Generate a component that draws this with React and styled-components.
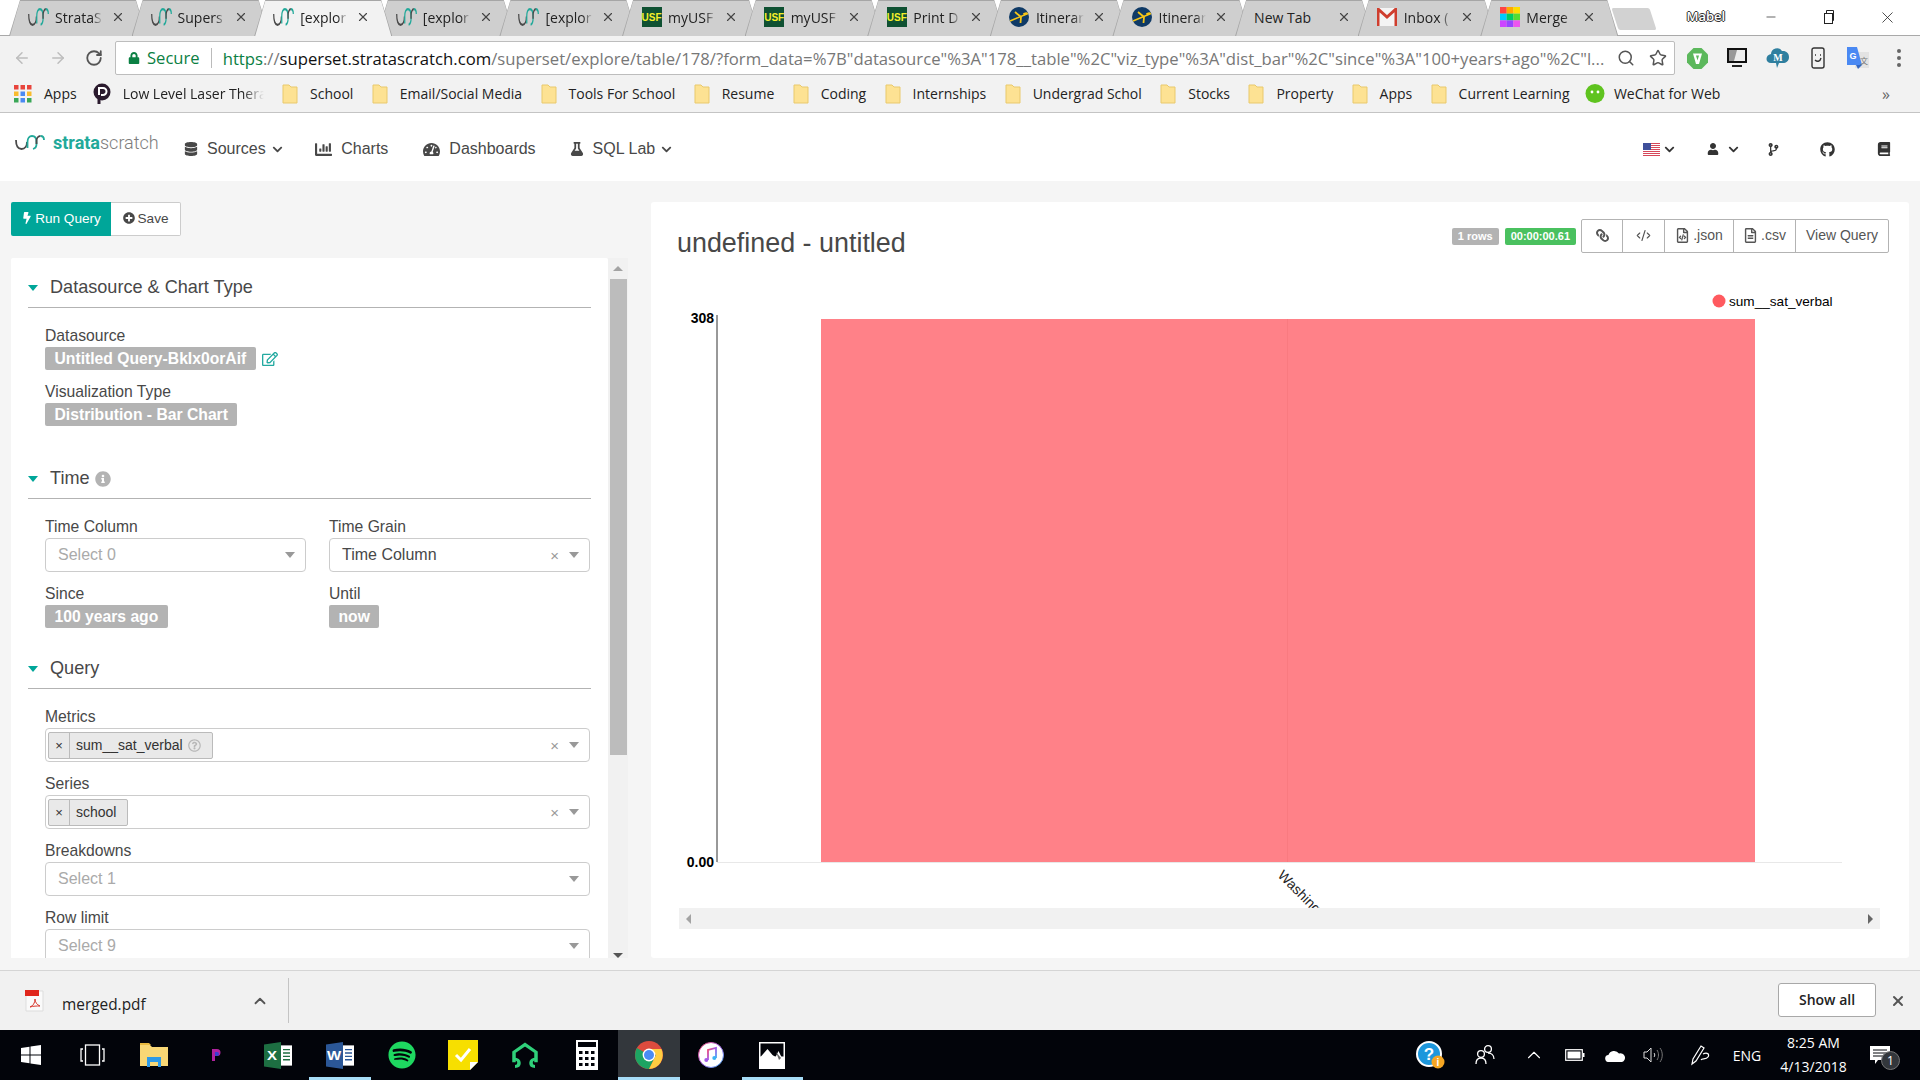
import React from "react";
import styled, { createGlobalStyle } from "styled-components";
import { ArrowLeft, ArrowRight, RotateCw, Search, Star, X, ChevronUp, Minus, CodeXml } from "lucide-react";
import {
  FaDatabase,
  FaChartBar,
  FaTachometerAlt,
  FaFlask,
  FaChevronDown,
  FaUser,
  FaGithub,
  FaBook,
  FaBolt,
  FaPlusCircle,
  FaRegEdit,
  FaInfoCircle,
  FaLink,
  FaRegFileCode,
  FaRegFileAlt,
  FaLock,
  FaCodeBranch,
  FaSpotify,
  FaRegQuestionCircle,
} from "react-icons/fa";

const GlobalStyle = createGlobalStyle`
  html, body {
    margin: 0;
    padding: 0;
    overflow: hidden;
    background: #fff;
    font-family: "Liberation Sans", Arial, sans-serif;
  }
  * { box-sizing: border-box; }
`;

const chromeFont = `"Open Sans", "Noto Sans", sans-serif`;

const Screen = styled.div`
  width: 1920px;
  height: 1080px;
  display: flex;
  flex-direction: column;
  overflow: hidden;
`;

/* ---------- browser tabs ---------- */
const TabStrip = styled.div`
  height: 36px;
  padding-left: 9px;
  display: flex;
  align-items: flex-start;
  background: #fff;
  border-bottom: 1px solid #a9a9a9;
`;
const Tab = styled.div`
  position: relative;
  width: 138px;
  height: 36px;
  margin-right: -15.4px;
  padding: 0 0 2px 19px;
  display: flex;
  align-items: center;
  flex-shrink: 0;
  z-index: ${(p) => (p.$active ? 2 : 1)};
  background: #a6a6a6;
  clip-path: polygon(11px 0, 127px 0, 138px 100%, 0 100%);
  font-family: ${chromeFont};
  font-size: 14px;
  color: #222;
  &::before {
    content: "";
    position: absolute;
    inset: 1px 1px 0 1px;
    background: ${(p) => (p.$active ? "#f2f2f2" : "#cfcfcf")};
    clip-path: polygon(10px 0, 126px 0, 136px 100%, 0 100%);
  }
`;
const TabIcon = styled.span`
  position: relative;
  width: 21px;
  height: 20px;
  display: flex;
  align-items: center;
  justify-content: center;
  flex-shrink: 0;
`;
const TabLabel = styled.span`
  position: relative;
  width: ${(p) => (p.$wide ? 75 : 48)}px;
  margin-left: ${(p) => (p.$wide ? 0 : 6)}px;
  overflow: hidden;
  white-space: nowrap;
  ${(p) =>
    p.$wide
      ? ""
      : `-webkit-mask-image: linear-gradient(90deg, #000 78%, transparent);
  mask-image: linear-gradient(90deg, #000 78%, transparent);`}
`;
const TabClose = styled(X)`
  position: relative;
  margin-left: 8px;
  color: #444;
`;
const NewTab = styled.div`
  width: 38px;
  height: 22px;
  margin: 8px 0 0 12px;
  background: #d2d2d2;
  border-radius: 2px;
  transform: skewX(18deg);
  flex-shrink: 0;
`;
const WindowArea = styled.div`
  margin-left: auto;
  height: 34px;
  padding-right: 3px;
  display: flex;
  align-items: center;
  color: #222;
`;
const UserName = styled.span`
  width: 38px;
  margin-right: 17px;
  font-family: ${chromeFont};
  font-size: 13px;
  font-weight: 600;
  color: #fff;
  text-shadow: 1px 0 0 #333, -1px 0 0 #333, 0 1px 0 #333, 0 -1px 0 #333;
  transform: translateY(-1px);
`;
const WindowButton = styled.span`
  width: 58.5px;
  display: flex;
  justify-content: center;
`;
const RestoreIcon = () => (
  <svg width="12" height="14" viewBox="0 0 12 14" fill="none" stroke="#222">
    <rect x="1.5" y="3.5" width="8" height="10" fill="#fff" />
    <path d="M3.5 3V.5h7v10H9.5" />
  </svg>
);

/* ---------- address bar ---------- */
const Toolbar = styled.div`
  height: 39px;
  background: #f2f2f2;
  padding: 5px 0 0 4px;
  display: flex;
  align-items: flex-start;
`;
const NavArrow = styled.span`
  width: 36px;
  height: 34px;
  flex-shrink: 0;
  display: flex;
  align-items: center;
  justify-content: center;
  color: ${(p) => (p.$off ? "#bdbdbd" : "#555")};
`;
const Omnibox = styled.div`
  width: 1560px;
  height: 34px;
  margin-left: 3px;
  padding-left: 12px;
  flex-shrink: 0;
  display: flex;
  align-items: center;
  background: #fff;
  border: 1px solid #bdbdbd;
  border-radius: 2px;
  font-family: ${chromeFont};
  font-size: 16.6px;
`;
const Secure = styled.span`
  margin-left: 7px;
  padding-right: 11px;
  border-right: 1px solid #bbb;
  color: #0b8043;
  line-height: 20px;
`;
const UrlText = styled.span`
  width: 1382px;
  margin-left: 11px;
  overflow: hidden;
  white-space: nowrap;
  color: #777;
  font-size: 16.7px;
`;
const UrlPart = styled.span`
  color: ${(p) => p.$color};
`;
const OmniTools = styled.span`
  margin-left: 12px;
  display: flex;
  align-items: center;
  gap: 14px;
  color: #555;
`;
const Extensions = styled.div`
  margin-left: 2px;
  display: flex;
  align-items: center;
  height: 34px;
`;
const ExtSlot = styled.span`
  width: 40.3px;
  display: flex;
  align-items: center;
  justify-content: center;
`;

/* ---------- bookmarks ---------- */
const BookmarkBar = styled.div`
  height: 38px;
  padding: 0 0 0 14px;
  display: flex;
  align-items: center;
  background: #f2f2f2;
  border-bottom: 1px solid #c4c4c4;
  font-family: ${chromeFont};
  font-size: 14px;
  color: #222;
`;
const Bookmark = styled.span`
  display: flex;
  align-items: center;
  gap: 12px;
  margin-right: ${(p) => p.$after || 18.4}px;
  white-space: nowrap;
`;
const WeChatBookmark = styled(Bookmark)`
  margin-left: -3px;
  gap: 9px;
`;
const FadeText = styled.span`
  width: 141px;
  overflow: hidden;
  -webkit-mask-image: linear-gradient(90deg, #000 85%, transparent);
  mask-image: linear-gradient(90deg, #000 85%, transparent);
`;
const More = styled.span`
  margin-left: auto;
  margin-right: 30px;
  color: #666;
  font-size: 16px;
`;
const Folder = () => (
  <svg width="16" height="20" viewBox="0 0 16 20">
    <path d="M1 1h6l2 2h6v16H1z" fill="#fde293" stroke="#e9c96c" />
  </svg>
);
const AppsGrid = () => {
  const colors = ["#e8453c", "#e8453c", "#e8453c", "#f9bb2d", "#4a89f3", "#f9bb2d", "#3aa757", "#4a89f3", "#3aa757"];
  return (
    <svg width="18" height="18" viewBox="0 0 18 18">
      {colors.map((c, i) => (
        <rect key={i} x={(i % 3) * 6.5} y={Math.floor(i / 3) * 6.5} width="4.5" height="4.5" fill={c} />
      ))}
    </svg>
  );
};
const PocketP = () => (
  <svg width="18" height="22" viewBox="0 0 18 22">
    <circle cx="9" cy="9" r="8.5" fill="#2b1b2e" />
    <path d="M6 19V5h4a3.5 3.5 0 0 1 0 7H8" fill="none" stroke="#fff" strokeWidth="2" />
    <path d="M6 12v9" stroke="#2b1b2e" strokeWidth="3" />
  </svg>
);
const WeChat = () => (
  <svg width="20" height="20" viewBox="0 0 20 20">
    <circle cx="10" cy="9.5" r="9.5" fill="#5fc31f" />
    <path d="M4 17l5-1-3-2z" fill="#5fc31f" />
    <circle cx="7" cy="8" r="1.4" fill="#fff" />
    <circle cx="13" cy="8" r="1.4" fill="#fff" />
  </svg>
);

/* ---------- app nav ---------- */
const NavBar = styled.div`
  height: 68px;
  padding: 4px 0 0 15px;
  display: flex;
  align-items: center;
  background: #fff;
  font-size: 16px;
  color: #484848;
`;
const Logo = styled.div`
  display: flex;
  align-items: center;
  width: 169px;
  gap: 8px;
  margin-top: -14px;
`;
const LogoText = styled.span`
  font-family: Roboto, sans-serif;
  font-size: 18px;
  font-weight: 300;
  color: #7d7d7d;
  b {
    color: #22a99a;
    font-weight: 700;
  }
`;
const NavItem = styled.span`
  display: flex;
  align-items: center;
  gap: 9px;
  margin-right: ${(p) => p.$after}px;
  white-space: nowrap;
`;
const NavChevron = styled(FaChevronDown)`
  margin-left: -3px;
  font-size: 11px;
`;
const NavRight = styled.div`
  margin-left: auto;
  padding-right: 29px;
  display: flex;
  align-items: center;
  color: #333;
`;
const NavRightItem = styled.span`
  display: flex;
  align-items: center;
  gap: ${(p) => p.$gap || 7}px;
  margin-left: ${(p) => p.$before}px;
`;
const Flag = () => (
  <svg width="17" height="13" viewBox="0 0 17 13">
    <rect width="17" height="13" fill="#fff" />
    {[0, 2, 4, 6, 8, 10, 12].map((y) => (
      <rect key={y} y={y} width="17" height="1" fill="#d6485a" />
    ))}
    <rect width="8" height="7" fill="#3f4f9a" />
  </svg>
);
const StrataMark = ({ w = 30, h = 15 }) => (
  <svg width={w} height={h} viewBox="0 0 30 15" fill="none" strokeWidth="1.8" preserveAspectRatio="none">
    <path d="M1 5C1 11 3 14 6.500 14C10 14 12 11 12 7" stroke="#4a4a4a" />
    <path d="M12.500 13V7C12.500 3 14.500 1 17 1C20 1 21.500 3 21.500 7V9C21.500 12 20 13.500 18 14" stroke="#22a99a" />
    <path d="M21.500 9V6C21.500 3 23.500 1 25.500 1" stroke="#4a4a4a" />
    <path d="M25.500 1C27.500 1 29 2.500 29 5" stroke="#22a99a" />
  </svg>
);

/* ---------- page body ---------- */
const Content = styled.div`
  height: 789px;
  padding: 21px 11px 12px 11px;
  display: grid;
  grid-template-columns: 617px 1258px;
  column-gap: 23px;
  background: #f5f5f5;
`;
const LeftColumn = styled.div`
  display: flex;
  flex-direction: column;
  min-height: 0;
`;
const ActionRow = styled.div`
  display: flex;
  height: 34px;
  margin-bottom: 22px;
`;
const RunButton = styled.button`
  width: 100px;
  height: 34px;
  padding: 0 0 2px;
  display: flex;
  align-items: center;
  justify-content: center;
  gap: 2px;
  border: none;
  border-radius: 2px 0 0 2px;
  background: #00a699;
  color: #fff;
  font: 13.6px "Liberation Sans", sans-serif;
`;
const SaveButton = styled.button`
  width: 70px;
  height: 34px;
  padding: 0 0 2px;
  display: flex;
  align-items: center;
  justify-content: center;
  gap: 3px;
  border: 1px solid #ccc;
  border-left: none;
  border-radius: 0 2px 2px 0;
  background: #fff;
  color: #484848;
  font: 13.6px "Liberation Sans", sans-serif;
`;
const FormWrap = styled.div`
  flex: 1;
  min-height: 0;
  display: flex;
`;
const FormPanel = styled.div`
  width: 597px;
  padding: 10px 17px 0;
  background: #fff;
  overflow: hidden;
  border-radius: 2px 2px 0 0;
`;
const ScrollTrack = styled.div`
  width: 20px;
  background: #f1f1f1;
  display: flex;
  flex-direction: column;
  align-items: center;
  padding-top: 8px;
`;
const ArrowUp = styled.span`
  width: 0;
  height: 0;
  border: 5px solid transparent;
  border-top: none;
  border-bottom: 5px solid #a3a3a3;
`;
const ArrowDownSmall = styled.span`
  width: 0;
  height: 0;
  margin-top: 198px;
  border: 5px solid transparent;
  border-bottom: none;
  border-top: 5px solid #555;
`;
const ScrollThumb = styled.div`
  width: 17px;
  height: 478px;
  margin-top: 8px;
  background: #bcbcbc;
`;
const Section = styled.section`
  margin-bottom: ${(p) => p.$after}px;
`;
const SectionHeader = styled.div`
  height: 40px;
  display: flex;
  align-items: center;
  border-bottom: 1px solid #b3b3b3;
  font-size: 18.1px;
  color: #484848;
`;
const Caret = styled.span`
  width: 0;
  height: 0;
  margin-right: 12px;
  border-left: 5.5px solid transparent;
  border-right: 5.5px solid transparent;
  border-top: 6px solid #00a699;
`;
const InfoIcon = styled(FaInfoCircle)`
  margin-left: 5px;
  color: #b3b3b3;
  font-size: 16px;
`;
const SectionBody = styled.div`
  padding: 17px 1px 0 17px;
  display: flex;
  flex-direction: column;
  gap: 11px;
`;
const TwoColumns = styled.div`
  display: grid;
  grid-template-columns: 261px 261px;
  column-gap: 23px;
`;
const Field = styled.div`
  min-width: 0;
`;
const Label = styled.div`
  height: 22px;
  line-height: 22px;
  font-size: 15.7px;
  color: #484848;
`;
const TagRow = styled.div`
  display: flex;
  align-items: center;
  gap: 6px;
`;
const ValueTag = styled.span`
  height: 23px;
  padding: 0 9.5px;
  display: inline-flex;
  align-items: center;
  border-radius: 2px;
  background: #b3b3b3;
  color: #fff;
  font-size: 15.7px;
  font-weight: 700;
`;
const EditIcon = styled(FaRegEdit)`
  color: #22a9a0;
  font-size: 16px;
`;
const SelectBox = styled.div`
  height: 34px;
  padding: 0 10px 0 ${(p) => (p.$multi ? 2 : 12)}px;
  display: flex;
  align-items: center;
  background: #fff;
  border: 1px solid #ccc;
  border-radius: 4px;
  font-size: 16px;
  color: ${(p) => (p.$placeholder ? "#aaa" : "#484848")};
`;
const SelectValue = styled.span`
  flex: 1;
`;
const ClearMark = styled.span`
  margin-right: 10px;
  font-size: 15px;
  line-height: 1;
  color: #999;
`;
const SelectArrow = styled.span`
  width: 0;
  height: 0;
  border-left: 5.5px solid transparent;
  border-right: 5.5px solid transparent;
  border-top: 6px solid #999;
`;
const MultiTag = styled.span`
  height: 27px;
  display: inline-flex;
  align-items: center;
  background: #e9e9e9;
  border: 1px solid #bbb;
  border-radius: 2px;
  font-size: 14px;
  color: #333;
`;
const MultiRemove = styled.span`
  width: 21px;
  height: 100%;
  display: flex;
  align-items: center;
  justify-content: center;
  border-right: 1px solid #bbb;
  font-size: 13px;
  line-height: 1;
`;
const MultiText = styled.span`
  display: flex;
  align-items: center;
  gap: 5px;
  padding: 0 11px 0 6px;
`;
const HelpIcon = styled(FaRegQuestionCircle)`
  color: #b8b8b8;
  font-size: 13px;
`;

/* ---------- chart panel ---------- */
const ChartPanel = styled.div`
  height: 756px;
  padding: 17px 20px 0 26px;
  background: #fff;
  border-radius: 3px;
  overflow: hidden;
`;
const ChartHeader = styled.div`
  display: flex;
  align-items: center;
  height: 34px;
`;
const ChartTitle = styled.h1`
  margin: 15px 0 0;
  font-size: 26.9px;
  font-weight: 400;
  color: #484848;
`;
const HeaderTools = styled.div`
  margin-left: auto;
  display: flex;
  align-items: center;
`;
const Badge = styled.span`
  height: 17px;
  margin-right: 6px;
  padding: 0 6px;
  display: inline-flex;
  align-items: center;
  border-radius: 2px;
  background: ${(p) => p.$bg};
  color: #fff;
  font-size: 11px;
  font-weight: 700;
`;
const ButtonGroup = styled.div`
  display: flex;
  height: 34px;
  margin-left: -1px;
  background: #fff;
  border: 1px solid #b3b3b3;
  border-radius: 2px;
`;
const GroupButton = styled.span`
  width: ${(p) => p.$w}px;
  padding-bottom: 2px;
  display: flex;
  align-items: center;
  justify-content: center;
  gap: 3px;
  font-size: 14px;
  color: #555;
  & + & {
    border-left: 1px solid #b3b3b3;
  }
`;
const LinkIcon = styled(FaLink)`
  transform: scaleX(-1);
`;
const ChartArea = styled.div`
  width: 1201px;
  margin: 27px 0 0 2px;
`;
const ChartSvg = styled.svg`
  display: block;
  font-family: "Liberation Sans", Arial, sans-serif;
`;
const HScroll = styled.div`
  height: 21px;
  padding: 0 7px;
  display: flex;
  align-items: center;
  justify-content: space-between;
  background: #f1f1f1;
`;
const HArrow = styled.span`
  width: 0;
  height: 0;
  border-top: 5px solid transparent;
  border-bottom: 5px solid transparent;
  ${(p) => (p.$right ? "border-left: 5px solid #666;" : "border-right: 5px solid #a3a3a3;")}
`;

/* ---------- download bar ---------- */
const DownloadBar = styled.div`
  height: 60px;
  display: flex;
  align-items: center;
  background: #f1f1f1;
  border-top: 1px solid #d5d5d5;
  font-family: ${chromeFont};
`;
const DownloadItem = styled.div`
  width: 289px;
  height: 45px;
  padding: 0 19px 0 25px;
  display: flex;
  align-items: center;
  border-right: 1px solid #c4c4c4;
  font-size: 15.4px;
  color: #222;
`;
const FileName = styled.span`
  margin-left: 18px;
  flex: 1;
  transform: translateY(4px);
`;
const ShowAll = styled.button`
  width: 98px;
  height: 34px;
  margin: -2px 0 0 auto;
  padding: 0;
  background: #fff;
  border: 1px solid #a8a8a8;
  border-radius: 3px;
  font: 600 14px ${chromeFont};
  color: #222;
`;
const DownloadClose = styled(X)`
  margin: 0 14px 0 14px;
  color: #555;
`;
const PdfIcon = () => (
  <svg width="19" height="22" viewBox="0 0 19 22">
    <path d="M1 1h17v20H1z" fill="#fafafa" stroke="#ddd" />
    <rect y="0" width="14" height="6" fill="#e0261c" />
    <path d="M5 17c3-1 5-4 5-8 0 3 2 6 5 7-3 0-7 0-10 1z" fill="none" stroke="#d9382f" strokeWidth="1" />
  </svg>
);

/* ---------- taskbar ---------- */
const Taskbar = styled.div`
  height: 50px;
  display: flex;
  align-items: stretch;
  background: #02040a;
  color: #fff;
  font-family: ${chromeFont};
`;
const TaskSlot = styled.span`
  width: 61.8px;
  display: flex;
  align-items: center;
  justify-content: center;
  background: ${(p) => (p.$focus ? "#33373c" : "transparent")};
  box-shadow: ${(p) => (p.$open ? "inset 0 -3px 0 #a6dcf7" : "none")};
`;
const Tray = styled.div`
  margin-left: auto;
  display: flex;
  align-items: center;
  padding-right: 30px;
`;
const TraySlot = styled.span`
  width: ${(p) => p.$w}px;
  display: flex;
  align-items: center;
  justify-content: center;
  font-size: 14px;
`;
const Clock = styled.span`
  width: 88px;
  margin-right: 12.5px;
  text-align: center;
  font-size: 14px;
  line-height: 24px;
`;
const NotifyWrap = styled.span`
  position: relative;
  display: flex;
`;
const NotifyCount = styled.span`
  position: absolute;
  right: -10px;
  bottom: -6px;
  width: 19px;
  height: 19px;
  border-radius: 50%;
  background: #33373c;
  border: 1px solid #777;
  display: flex;
  align-items: center;
  justify-content: center;
  font-size: 12px;
`;

const WindowsLogo = () => (
  <svg width="20" height="20" viewBox="0 0 20 20" fill="#fff">
    <path d="M0 3l8.5-1.2v7.7H0zM9.5 1.6L20 0v9.5H9.5zM0 10.5h8.5v7.7L0 17zM9.5 10.5H20V20L9.5 18.4z" />
  </svg>
);
const TaskView = () => (
  <svg width="25" height="22" viewBox="0 0 25 22" fill="none" stroke="#fff" strokeWidth="1.3">
    <rect x="5.5" y="1" width="14" height="20" />
    <path d="M3 5H1v12h2M22 5h2v12h-2" />
  </svg>
);
const Explorer = () => (
  <svg width="28" height="26" viewBox="0 0 28 26">
    <path d="M0 3h10l2 2h16v19H0z" fill="#f8d775" />
    <path d="M0 1h9l2 2H0z" fill="#e8b93f" />
    <path d="M7 15h14v10h-3v-5h-8v5H7z" fill="#2e9ae6" />
  </svg>
);
const PurpleApp = () => (
  <svg width="10" height="14" viewBox="0 0 10 14">
    <path d="M1 1h5a3.5 3.5 0 0 1 0 7H4v5H1z" fill="#b0229e" />
    <path d="M4 4h2a2 2 0 0 1 0 4H4z" fill="#3a3fd0" />
  </svg>
);
const OfficeDoc = ({ fill, letter }) => (
  <svg width="28" height="27" viewBox="0 0 28 32" preserveAspectRatio="none">
    <path d="M0 3l17-3v32L0 29z" fill={fill} />
    <path d="M17 4h11v24H17z" fill="#fff" />
    <path d="M19 9h7M19 13h7M19 17h7M19 21h7" stroke={fill} strokeWidth="1.6" />
    <text x="8" y="21" textAnchor="middle" fontSize="15" fontWeight="700" fill="#fff" fontFamily="Liberation Sans">
      {letter}
    </text>
  </svg>
);
const StickyNote = () => (
  <svg width="30" height="30" viewBox="0 0 30 30">
    <path d="M0 0h30v22l-8 8H0z" fill="#f7df00" />
    <path d="M30 22l-8 8v-8z" fill="#fff" />
    <path d="M8 15l5 5 9-11" fill="none" stroke="#fff" strokeWidth="3" />
  </svg>
);
const Headset = () => (
  <svg width="30" height="27" viewBox="0 0 30 32" fill="none" stroke="#2fd07a" strokeWidth="3.5" preserveAspectRatio="none">
    <path d="M4 24V12L15 3l11 9v12" />
    <path d="M4 20c3 0 5 2 5 5s-2 4-4 4M26 20c-3 0-5 2-5 5s2 4 4 4" />
  </svg>
);
const Calculator = () => (
  <svg width="22" height="30" viewBox="0 0 22 30">
    <rect width="22" height="30" fill="#fff" />
    <rect x="2" y="2" width="18" height="5" fill="#02040a" />
    {[11, 17, 23].map((y) =>
      [3, 9, 15].map((x) => <rect key={`${x}${y}`} x={x} y={y} width="3.5" height="3" fill="#02040a" />)
    )}
  </svg>
);
const ChromeLogo = () => (
  <svg width="28" height="28" viewBox="0 0 28 28">
    <circle cx="14" cy="14" r="14" fill="#dd4b3e" />
    <path d="M14 14L1.9 7A14 14 0 0 0 14 28l7-14z" fill="#1da462" />
    <path d="M14 8h12.4A14 14 0 0 1 14 28l7-14z" fill="#ffcd41" />
    <circle cx="14" cy="14" r="6.4" fill="#fff" />
    <circle cx="14" cy="14" r="5" fill="#4a8bf5" />
  </svg>
);
const ITunes = () => (
  <svg width="26" height="26" viewBox="0 0 26 26">
    <defs>
      <linearGradient id="itunesRing" x1="0" y1="0" x2="1" y2="1">
        <stop offset="0" stopColor="#f5466a" />
        <stop offset="0.5" stopColor="#a45be8" />
        <stop offset="1" stopColor="#3cb4f5" />
      </linearGradient>
    </defs>
    <circle cx="13" cy="13" r="12.5" fill="#fff" stroke="url(#itunesRing)" />
    <path d="M10 18V8l8-2v10" fill="none" stroke="url(#itunesRing)" strokeWidth="1.8" />
    <circle cx="8.3" cy="18" r="2" fill="#a45be8" />
    <circle cx="16.3" cy="16" r="2" fill="#3cb4f5" />
  </svg>
);
const PhotosIcon = () => (
  <svg width="26" height="27" viewBox="0 0 26 27">
    <rect width="26" height="27" fill="#fff" />
    <rect x="1.5" y="1.5" width="23" height="13" fill="#02040a" />
    <path d="M1.5 15l7-8 5 6 3 2 3-6 3 6 2 1v2h-23z" fill="#fff" />
    <path d="M17 10l3 8 2-2z" fill="#666" />
  </svg>
);
const HelpBadge = () => (
  <svg width="29" height="29" viewBox="0 0 29 29">
    <circle cx="13" cy="13" r="12" fill="#1d97dc" stroke="#fff" strokeWidth="2" />
    <text x="13" y="19" textAnchor="middle" fontSize="17" fontWeight="700" fill="#fff" fontFamily="Liberation Sans">?</text>
    <circle cx="22" cy="21" r="6.5" fill="#f5a623" />
    <text x="22" y="25" textAnchor="middle" fontSize="10" fontWeight="700" fill="#fff" fontFamily="Liberation Sans">i</text>
  </svg>
);
const People = () => (
  <svg width="20" height="22" viewBox="0 0 20 22" fill="none" stroke="#fff" strokeWidth="1.3">
    <circle cx="13" cy="5" r="3.4" />
    <circle cx="6" cy="10" r="3.4" />
    <path d="M1 20c0-5 3-6 5-6s5 1 5 6M13 9c3 0 6 2 6 6" />
  </svg>
);
const Battery = () => (
  <svg width="20" height="12" viewBox="0 0 20 12">
    <rect x="0.7" y="0.7" width="16.6" height="10.6" fill="none" stroke="#fff" strokeWidth="1.2" />
    <rect x="2.5" y="2.5" width="13" height="7" fill="#fff" />
    <rect x="18" y="4" width="1.5" height="4" fill="#fff" />
  </svg>
);
const CloudIcon = () => (
  <svg width="21" height="13" viewBox="0 0 21 13" fill="#fff">
    <path d="M4 13a3.5 3.5 0 0 1-.6-7A6 6 0 0 1 14 4.500a4.300 4.300 0 0 1 3 8.500z" />
  </svg>
);
const Speaker = () => (
  <svg width="22" height="18" viewBox="0 0 22 18" fill="none" stroke="#ddd" strokeWidth="1">
    <path d="M1 6h3l4-4v14l-4-4H1z" />
    <path d="M11 7c1 1 1 3 0 4" />
    <path d="M14 4c2 3 2 7 0 10M17 2c3 4 3 10 0 14" stroke="#777" />
  </svg>
);
const PenIcon = () => (
  <svg width="21" height="22" viewBox="0 0 21 22" fill="none" stroke="#fff" strokeWidth="1.2">
    <path d="M3 20l1-5 8-13 3 2-8 13z" />
    <path d="M14 10c4-2 7 0 5 3s-6 1-7 3" />
  </svg>
);
const ActionCenter = () => (
  <svg width="20" height="18" viewBox="0 0 20 18">
    <path d="M0 0h20v14H8l-3 4v-4H0z" fill="#fff" />
    <path d="M3 4h14M3 7h14M3 10h14" stroke="#02040a" />
  </svg>
);

/* ---------- favicons + extensions ---------- */
const UsfMark = styled.span`
  width: 20px;
  height: 20px;
  display: flex;
  align-items: center;
  justify-content: center;
  background: #0f5132;
  color: #f5f02a;
  font: 700 10px "Liberation Sans", sans-serif;
`;
const ExpediaMark = () => (
  <svg width="20" height="20" viewBox="0 0 20 20">
    <circle cx="10" cy="10" r="10" fill="#0f3a66" />
    <path d="M1 14L19 6.500" stroke="#f5c518" strokeWidth="1.6" />
    <path d="M6 5l6 5-0.500 6" fill="none" stroke="#f5c518" strokeWidth="1.8" />
    <path d="M14.500 7.500c1.500-.8 3-1.200 3.500-1" stroke="#f5c518" strokeWidth="2.400" />
  </svg>
);
const GmailMark = () => (
  <svg width="20" height="18" viewBox="0 0 20 18">
    <rect width="20" height="18" fill="#f4f4f4" />
    <path d="M1 18V1l9 8 9-8v17" fill="none" stroke="#cf3e2e" strokeWidth="3" />
  </svg>
);
const MergeMark = () => {
  const colors = ["#f44", "#fa0", "#fd0", "#0cf", "#0c6", "#5d3", "#c4f", "#94f", "#e5e"];
  return (
    <svg width="20" height="20" viewBox="0 0 21 21">
      {colors.map((c, i) => (
        <rect key={i} x={(i % 3) * 7} y={Math.floor(i / 3) * 7} width="7" height="7" fill={c} />
      ))}
    </svg>
  );
};
const VpnExt = () => (
  <svg width="21" height="21" viewBox="0 0 21 21">
    <path d="M6.500 0h8L21 6.500v8L14.500 21h-8L0 14.500v-8z" fill="#5cb85c" />
    <path d="M6 5.500h9l-3 10.500H9z" fill="#fff" />
    <path d="M9 7.500h3l-1.500 5z" fill="#5cb85c" />
  </svg>
);
const MonitorExt = () => (
  <svg width="20" height="20" viewBox="0 0 20 20">
    <rect x="1" y="1" width="18" height="13" fill="#999" stroke="#111" strokeWidth="2" />
    <path d="M10 2h8v11h-11z" fill="#eee" />
    <rect x="5" y="17" width="10" height="2" fill="#222" />
  </svg>
);
const MendeleyExt = () => (
  <svg width="24" height="22" viewBox="0 0 24 22">
    <path d="M5 7a6 6 0 0 1 11-3c4-.5 7 2 7 6 0 4-3 6-6 6h-4l-2 5-1-5H5c-6 0-6-8 0-9z" fill="#2f7f9f" />
    <text x="12" y="14" textAnchor="middle" fontSize="10" fontWeight="700" fill="#fff" fontFamily="Liberation Serif">M</text>
  </svg>
);
const PhoneExt = () => (
  <svg width="14" height="22" viewBox="0 0 14 22" fill="none" stroke="#333" strokeWidth="1.4">
    <rect x="1" y="1" width="12" height="20" rx="2" />
    <path d="M4 8h1M9 8h1M4 13c2 2 5 2 6-2" />
  </svg>
);
const TranslateExt = () => (
  <svg width="22" height="22" viewBox="0 0 22 22">
    <path d="M8 5h14v16H8z" fill="#e3e3e3" />
    <path d="M0 0h10l5 18H0z" fill="#4a89f3" />
    <path d="M9 18h6l-4 4z" fill="#3367c4" />
    <text x="6" y="12" textAnchor="middle" fontSize="9" fontWeight="700" fill="#fff" fontFamily="Liberation Sans">G</text>
    <text x="17" y="17" textAnchor="middle" fontSize="8" fill="#777" fontFamily="Noto Sans CJK SC">文</text>
  </svg>
);
const MenuDots = styled.span`
  width: 4px;
  height: 4px;
  border-radius: 50%;
  background: #666;
  box-shadow: 0 -7px 0 #666, 0 7px 0 #666;
`;

const strata = <StrataMark w={21} h={18} />;
const usf = <UsfMark>USF</UsfMark>;
const tabs = [
  { label: "StrataS", icon: strata },
  { label: "Supers", icon: strata },
  { label: "[explor", icon: strata, active: true },
  { label: "[explor", icon: strata },
  { label: "[explor", icon: strata },
  { label: "myUSF", icon: usf },
  { label: "myUSF", icon: usf },
  { label: "Print D", icon: usf },
  { label: "Itinerar", icon: <ExpediaMark /> },
  { label: "Itinerar", icon: <ExpediaMark /> },
  { label: "New Tab" },
  { label: "Inbox (", icon: <GmailMark /> },
  { label: "Merge", icon: <MergeMark /> },
];

const folders = [
  "School",
  "Email/Social Media",
  "Tools For School",
  "Resume",
  "Coding",
  "Internships",
  "Undergrad Schol",
  "Stocks",
  "Property",
  "Apps",
  "Current Learning",
];

const SectionTitle = ({ children }) => (
  <SectionHeader>
    <Caret />
    {children}
  </SectionHeader>
);

const Select = ({ placeholder, value, clearable }) => (
  <SelectBox $placeholder={!!placeholder}>
    <SelectValue>{placeholder || value}</SelectValue>
    {clearable && <ClearMark>×</ClearMark>}
    <SelectArrow />
  </SelectBox>
);

const MultiSelect = ({ value, help }) => (
  <SelectBox $multi>
    <SelectValue>
      <MultiTag>
        <MultiRemove>×</MultiRemove>
        <MultiText>
          {value}
          {help && <HelpIcon />}
        </MultiText>
      </MultiTag>
    </SelectValue>
    <ClearMark>×</ClearMark>
    <SelectArrow />
  </SelectBox>
);

const BarChart = () => (
  <ChartSvg width="1201" height="628" viewBox="0 0 1201 628">
    <rect x="142" y="39" width="934" height="543" fill="#ff8188" />
    <line x1="608.500" y1="39" x2="608.500" y2="582" stroke="#f97a80" />
    <line x1="38" y1="582.500" x2="1163" y2="582.500" stroke="#e8e8e8" />
    <line x1="38" y1="35" x2="38" y2="582" stroke="#333" />
    <text x="35" y="43" textAnchor="end" fontSize="14" fontWeight="700" fill="#000">308</text>
    <text x="35" y="587" textAnchor="end" fontSize="14" fontWeight="700" fill="#000">0.00</text>
    <circle cx="1040" cy="21" r="6.500" fill="#ff5a5f" />
    <text x="1050" y="26" fontSize="13.6" fill="#000">sum__sat_verbal</text>
    <text x="598" y="596" fontSize="14" fill="#222" transform="rotate(45 598 596)">Washington</text>
  </ChartSvg>
);

const App = () => (
  <Screen>
    <GlobalStyle />
    <TabStrip>
      {tabs.map((t, i) => (
        <Tab key={i} $active={t.active}>
          {t.icon && <TabIcon>{t.icon}</TabIcon>}
          <TabLabel $wide={!t.icon}>{t.label}</TabLabel>
          <TabClose size={14} strokeWidth={2} />
        </Tab>
      ))}
      <NewTab />
      <WindowArea>
        <UserName>Mabel</UserName>
        <WindowButton><Minus size={14} strokeWidth={1.2} /></WindowButton>
        <WindowButton><RestoreIcon /></WindowButton>
        <WindowButton><X size={19} strokeWidth={1} /></WindowButton>
      </WindowArea>
    </TabStrip>

    <Toolbar>
      <NavArrow $off><ArrowLeft size={18} /></NavArrow>
      <NavArrow $off><ArrowRight size={18} /></NavArrow>
      <NavArrow><RotateCw size={18} strokeWidth={2.4} /></NavArrow>
      <Omnibox>
        <FaLock size={12} color="#0b8043" />
        <Secure>Secure</Secure>
        <UrlText>
          <UrlPart $color="#0b8043">https</UrlPart>://<UrlPart $color="#111">superset.stratascratch.com</UrlPart>
          /superset/explore/table/178/?form_data=%7B"datasource"%3A"178__table"%2C"viz_type"%3A"dist_bar"%2C"since"%3A"100+years+ago"%2C"l...
        </UrlText>
        <OmniTools>
          <Search size={18} strokeWidth={2} />
          <Star size={18} strokeWidth={2} />
        </OmniTools>
      </Omnibox>
      <Extensions>
        <ExtSlot><VpnExt /></ExtSlot>
        <ExtSlot><MonitorExt /></ExtSlot>
        <ExtSlot><MendeleyExt /></ExtSlot>
        <ExtSlot><PhoneExt /></ExtSlot>
        <ExtSlot><TranslateExt /></ExtSlot>
        <ExtSlot><MenuDots /></ExtSlot>
      </Extensions>
    </Toolbar>

    <BookmarkBar>
      <Bookmark $after={16}><AppsGrid />Apps</Bookmark>
      <Bookmark><PocketP /><FadeText>Low Level Laser Thera</FadeText></Bookmark>
      {folders.map((f, i) => (
        <Bookmark key={i}><Folder />{f}</Bookmark>
      ))}
      <WeChatBookmark><WeChat />WeChat for Web</WeChatBookmark>
      <More>»</More>
    </BookmarkBar>

    <NavBar>
      <Logo>
        <StrataMark />
        <LogoText><b>strata</b>scratch</LogoText>
      </Logo>
      <NavItem $after={32.5}><FaDatabase size={14} />Sources<NavChevron /></NavItem>
      <NavItem $after={35}><FaChartBar size={17} />Charts</NavItem>
      <NavItem $after={34}><FaTachometerAlt size={17} />Dashboards</NavItem>
      <NavItem $after={0}><FaFlask size={14} />SQL Lab<NavChevron /></NavItem>
      <NavRight>
        <NavRightItem $before={0}><Flag /><NavChevron /></NavRightItem>
        <NavRightItem $before={32} $gap={12}><FaUser size={12} /><NavChevron /></NavRightItem>
        <NavRightItem $before={28}><FaCodeBranch size={13} /></NavRightItem>
        <NavRightItem $before={40}><FaGithub size={15} /></NavRightItem>
        <NavRightItem $before={42}><FaBook size={14} /></NavRightItem>
      </NavRight>
    </NavBar>

    <Content>
      <LeftColumn>
        <ActionRow>
          <RunButton><FaBolt size={12} />Run Query</RunButton>
          <SaveButton><FaPlusCircle size={12} />Save</SaveButton>
        </ActionRow>
        <FormWrap>
          <FormPanel>
            <Section $after={33}>
              <SectionTitle>Datasource &amp; Chart Type</SectionTitle>
              <SectionBody>
                <Field>
                  <Label>Datasource</Label>
                  <TagRow><ValueTag>Untitled Query-BkIx0orAif</ValueTag><EditIcon /></TagRow>
                </Field>
                <Field>
                  <Label>Visualization Type</Label>
                  <TagRow><ValueTag>Distribution - Bar Chart</ValueTag></TagRow>
                </Field>
              </SectionBody>
            </Section>
            <Section $after={21}>
              <SectionTitle>Time<InfoIcon /></SectionTitle>
              <SectionBody>
                <TwoColumns>
                  <Field><Label>Time Column</Label><Select placeholder="Select 0" /></Field>
                  <Field><Label>Time Grain</Label><Select value="Time Column" clearable /></Field>
                </TwoColumns>
                <TwoColumns>
                  <Field><Label>Since</Label><TagRow><ValueTag>100 years ago</ValueTag></TagRow></Field>
                  <Field><Label>Until</Label><TagRow><ValueTag>now</ValueTag></TagRow></Field>
                </TwoColumns>
              </SectionBody>
            </Section>
            <Section $after={0}>
              <SectionTitle>Query</SectionTitle>
              <SectionBody>
                <Field><Label>Metrics</Label><MultiSelect value="sum__sat_verbal" help /></Field>
                <Field><Label>Series</Label><MultiSelect value="school" /></Field>
                <Field><Label>Breakdowns</Label><Select placeholder="Select 1" /></Field>
                <Field><Label>Row limit</Label><Select placeholder="Select 9" /></Field>
              </SectionBody>
            </Section>
          </FormPanel>
          <ScrollTrack>
            <ArrowUp />
            <ScrollThumb />
            <ArrowDownSmall />
          </ScrollTrack>
        </FormWrap>
      </LeftColumn>

      <ChartPanel>
        <ChartHeader>
          <ChartTitle>undefined - untitled</ChartTitle>
          <HeaderTools>
            <Badge $bg="#b3b3b3">1 rows</Badge>
            <Badge $bg="#4ac15f">00:00:00.61</Badge>
            <ButtonGroup>
              <GroupButton $w={40}><LinkIcon size={13} /></GroupButton>
              <GroupButton $w={42}><CodeXml size={15} strokeWidth={1.8} /></GroupButton>
              <GroupButton $w={69}><FaRegFileCode size={15} />.json</GroupButton>
              <GroupButton $w={62}><FaRegFileAlt size={15} />.csv</GroupButton>
              <GroupButton $w={93}>View Query</GroupButton>
            </ButtonGroup>
          </HeaderTools>
        </ChartHeader>
        <ChartArea>
          <BarChart />
          <HScroll>
            <HArrow />
            <HArrow $right />
          </HScroll>
        </ChartArea>
      </ChartPanel>
    </Content>

    <DownloadBar>
      <DownloadItem>
        <PdfIcon />
        <FileName>merged.pdf</FileName>
        <ChevronUp size={18} strokeWidth={2.4} color="#555" />
      </DownloadItem>
      <ShowAll>Show all</ShowAll>
      <DownloadClose size={16} strokeWidth={3} />
    </DownloadBar>

    <Taskbar>
      <TaskSlot><WindowsLogo /></TaskSlot>
      <TaskSlot><TaskView /></TaskSlot>
      <TaskSlot><Explorer /></TaskSlot>
      <TaskSlot><PurpleApp /></TaskSlot>
      <TaskSlot><OfficeDoc fill="#1d6f42" letter="X" /></TaskSlot>
      <TaskSlot $open><OfficeDoc fill="#2b5797" letter="W" /></TaskSlot>
      <TaskSlot><FaSpotify size={28} color="#1ed760" /></TaskSlot>
      <TaskSlot><StickyNote /></TaskSlot>
      <TaskSlot><Headset /></TaskSlot>
      <TaskSlot><Calculator /></TaskSlot>
      <TaskSlot $focus $open><ChromeLogo /></TaskSlot>
      <TaskSlot><ITunes /></TaskSlot>
      <TaskSlot $open><PhotosIcon /></TaskSlot>
      <Tray>
        <TraySlot $w={52}><HelpBadge /></TraySlot>
        <TraySlot $w={56}><People /></TraySlot>
        <TraySlot $w={42}><ChevronUp size={22} strokeWidth={1.2} /></TraySlot>
        <TraySlot $w={41}><Battery /></TraySlot>
        <TraySlot $w={39}><CloudIcon /></TraySlot>
        <TraySlot $w={39}><Speaker /></TraySlot>
        <TraySlot $w={51}><PenIcon /></TraySlot>
        <TraySlot $w={45}>ENG</TraySlot>
        <Clock>8:25 AM<br />4/13/2018</Clock>
        <NotifyWrap>
          <ActionCenter />
          <NotifyCount>1</NotifyCount>
        </NotifyWrap>
      </Tray>
    </Taskbar>
  </Screen>
);

export default App;
